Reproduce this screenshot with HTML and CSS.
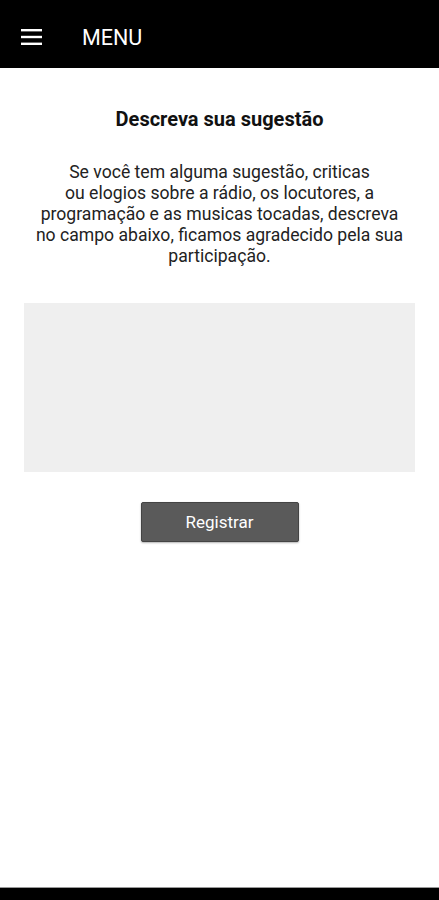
FILE: index.html
```html
<!DOCTYPE html>
<html lang="pt">
  <head>
    <meta charset="UTF-8" />
    <meta name="viewport" content="width=device-width, initial-scale=1.0" />
    <title>Sugestão</title>
    <link rel="stylesheet" href="styles.css">
  </head>
  <body>
    <header class="toolbar">
      <svg class="menu-icon" width="22" height="18" viewBox="0 0 22 18">
        <rect x="0" y="1" width="21" height="2.4" fill="#fff" />
        <rect x="0" y="7.8" width="21" height="2.4" fill="#fff" />
        <rect x="0" y="14.6" width="21" height="2.4" fill="#fff" />
      </svg>
      <span class="toolbar-title">MENU</span>
    </header>

    <main class="content">
      <h1 class="title">Descreva sua sugestão</h1>
      <p class="intro">
        Se você tem alguma sugestão, criticas<br />
        ou elogios sobre a rádio, os locutores, a<br />
        programação e as musicas tocadas, descreva<br />
        no campo abaixo, ficamos agradecido pela sua<br />
        participação.
      </p>
      <textarea class="message"></textarea>
      <button class="submit" type="button">Registrar</button>
    </main>

    <div class="navbar"></div>
  </body>
</html>
```

FILE: styles.css
```css
html,
body {
  height: 100%;
}
body {
  margin: 0;
  padding: 0;
  font-family: Roboto, "Liberation Sans", sans-serif;
  background-color: #fff;
  color: #222;
  display: flex;
  flex-direction: column;
}
.toolbar {
  height: 68px;
  background-color: #000;
  display: flex;
  align-items: center;
  padding-left: 21px;
  flex-shrink: 0;
}
.menu-icon {
  margin-top: 5px;
}
.toolbar-title {
  color: #fff;
  font-size: 21.5px;
  margin-left: 39px;
  margin-top: 7px;
}
.content {
  flex: 1;
  display: flex;
  flex-direction: column;
  align-items: center;
}
.title {
  font-size: 20px;
  font-weight: 700;
  color: #111;
  margin: 39px 0 0;
  line-height: 24px;
}
.intro {
  font-size: 17.6px;
  line-height: 21px;
  text-align: center;
  color: #222;
  margin: 31px 0 0;
}
.message {
  box-sizing: border-box;
  width: 391px;
  height: 169px;
  margin: 36px 0 0;
  border: none;
  background-color: #efefef;
  resize: none;
}
.submit {
  width: 158px;
  height: 40px;
  margin-top: 30px;
  border: 1px solid #444;
  border-radius: 2px;
  background-color: #5a5a5a;
  color: #fff;
  font-family: Roboto, "Liberation Sans", sans-serif;
  font-size: 17px;
  box-shadow: 0 1px 2px rgba(0, 0, 0, 0.3);
}
.navbar {
  height: 12px;
  background-color: #000;
  border-top: 1px solid #999;
  flex-shrink: 0;
}
```
